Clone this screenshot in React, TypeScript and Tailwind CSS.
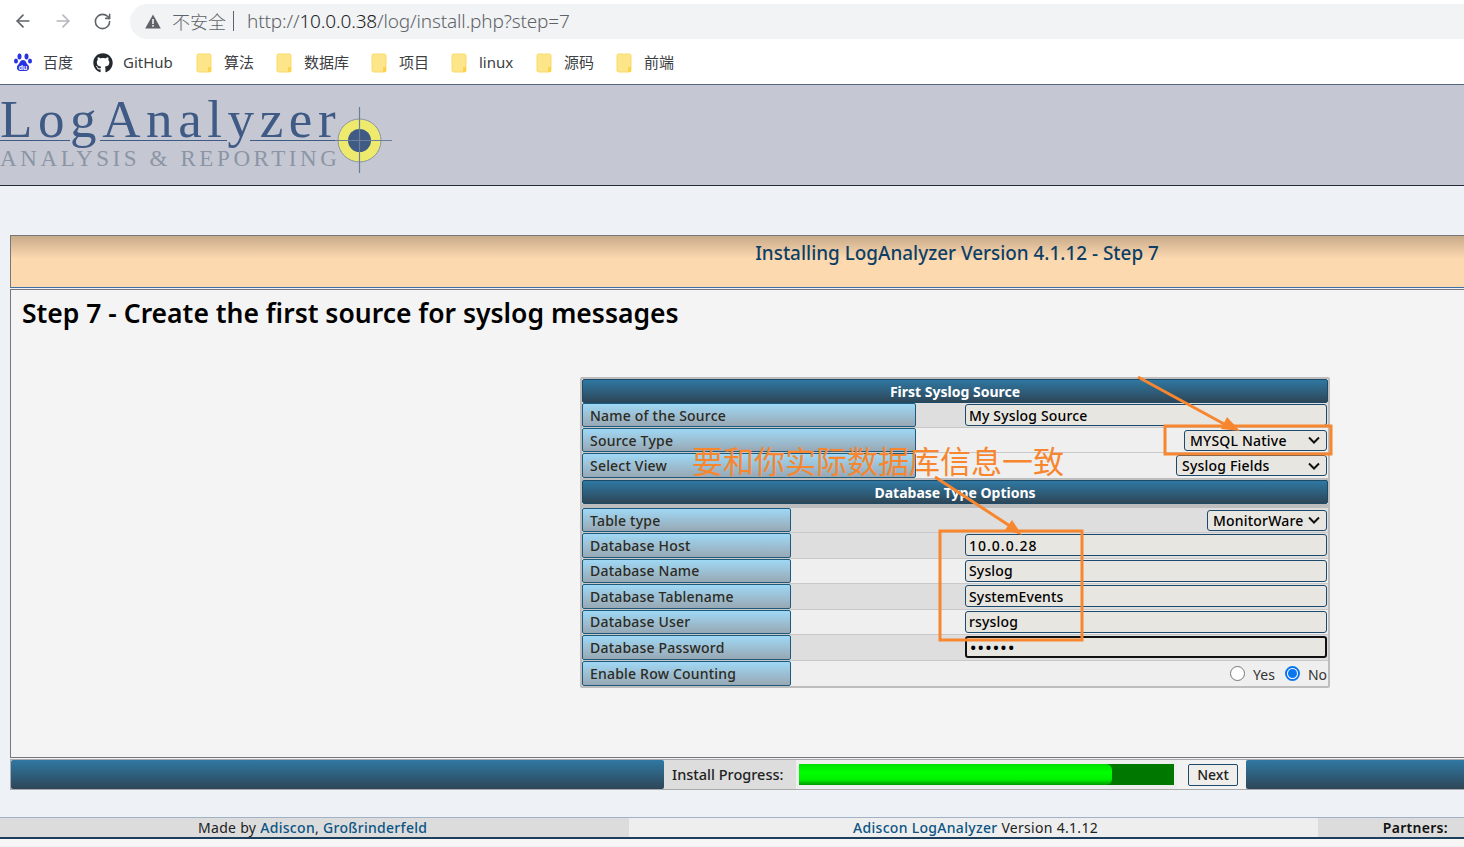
import { ArrowLeft, ArrowRight, RotateCw } from 'lucide-react';
import { FaGithub } from 'react-icons/fa';

const barBg = 'bg-[linear-gradient(#2f78a3,#2e4657)]';
const labelBg = 'bg-[linear-gradient(#9fd8f5,#98a8b4)]';

const bookmarks = [
  { name: '算法', w: 'w-[80px]' },
  { name: '数据库', w: 'w-[95px]' },
  { name: '项目', w: 'w-[80px]' },
  { name: 'linux', w: 'w-[85px]' },
  { name: '源码', w: 'w-[80px]' },
  { name: '前端', w: 'w-[80px]' },
];

function Folder() {
  return (
    <svg width="16" height="20" viewBox="0 0 16 20" className="shrink-0">
      <rect x="1" y="1" width="14" height="18" rx="1.5" fill="#fde68a" stroke="#fbd96b" />
      <path d="M12 19v-5h3v5z" fill="#fcd34d" />
    </svg>
  );
}

function BaiduPaw() {
  return (
    <svg width="18" height="20" viewBox="0 0 18 20" className="shrink-0">
      <ellipse cx="5.5" cy="3.5" rx="2" ry="3" fill="#2932e1" />
      <ellipse cx="12.5" cy="3.5" rx="2" ry="3" fill="#2932e1" />
      <ellipse cx="2" cy="8" rx="2" ry="2.6" fill="#2932e1" />
      <ellipse cx="16" cy="8" rx="2" ry="2.6" fill="#2932e1" />
      <path d="M9 7c-3 0-3 3-5 5-2 2-1 6 2 6h6c3 0 4-4 2-6-2-2-2-5-5-5z" fill="#2932e1" />
      <text x="9" y="16.5" textAnchor="middle" fontSize="7" fontWeight="700" fill="#fff" fontFamily="Liberation Sans, sans-serif">du</text>
    </svg>
  );
}

function Browser() {
  return (
    <div className="h-[85px] bg-white border-b border-[#52667f] font-['Noto_Sans','Noto_Sans_CJK_SC',sans-serif]">
      <div className="h-[42px] flex items-center">
        <div className="w-[130px] pl-[13px] flex items-center gap-[20px] text-[#5f6368]">
          <ArrowLeft size={20} strokeWidth={2} />
          <ArrowRight size={20} strokeWidth={2} className="text-[#b4b7bb]" />
          <RotateCw size={19} strokeWidth={2} />
        </div>
        <div className="flex-1 h-[35px] rounded-l-full bg-[#f1f3f4] flex items-center pl-[15px] text-[18px] text-[#5f6368]">
          <svg width="16" height="15" viewBox="0 0 16 15" className="shrink-0">
            <path d="M8 0.5 15.8 14.5H0.2z" fill="#5f6368" />
            <rect x="7.2" y="5" width="1.6" height="5" fill="#f1f3f4" />
            <rect x="7.2" y="11" width="1.6" height="1.7" fill="#f1f3f4" />
          </svg>
          <span className="ml-[11px] font-['Noto_Sans_CJK_SC',sans-serif] font-light">不安全</span>
          <span className="ml-[7px] w-px h-[20px] bg-[#5f6368]" />
          <span className="ml-[13px] text-[19px] tracking-[-0.15px] font-light">
            http://<span className="text-[#202124]">10.0.0.38</span>/log/install.php?step=7
          </span>
        </div>
      </div>
      <div className="h-[42px] flex items-center text-[15px] text-[#3c4043] pb-[1px]">
        <div className="w-[93px] pl-[14px] flex items-center gap-[11px]">
          <BaiduPaw />
          <span>百度</span>
        </div>
        <div className="w-[103px] flex items-center gap-[10px]">
          <FaGithub size={20} className="text-[#24292e]" />
          <span>GitHub</span>
        </div>
        {bookmarks.map((b) => (
          <div key={b.name} className={`${b.w} flex items-center gap-[12px]`}>
            <Folder />
            <span>{b.name}</span>
          </div>
        ))}
      </div>
    </div>
  );
}

function Logo() {
  return (
    <div className="h-[101px] bg-[#c5c8d2] border-b border-[#222b36] relative font-['Liberation_Serif',serif]">
      <div className="text-[53px] leading-[60px] tracking-[5.6px] text-[#3f5a85] pt-[4px] h-[64px] whitespace-nowrap">
        LogAnalyzer
      </div>
      <div className="text-[23px] leading-[26px] tracking-[3.6px] text-[#8b95a6] whitespace-nowrap mt-[-3px]">
        ANALYSIS &amp; REPORTING
      </div>
      <svg width="400" height="100" viewBox="0 0 400 100" className="absolute left-0 top-0">
        <path d="M0 55.5H70M100 55.5H227M250 55.5H338" stroke="#3f5a85" strokeWidth="1.2" />
        <circle cx="359.5" cy="55.5" r="21.5" fill="#edea6e" stroke="#8b95a6" />
        <circle cx="359.5" cy="55.5" r="11.5" fill="#3f5a85" />
        <path d="M359.5 22V88M335 55.5H392" stroke="#6d7f9b" strokeWidth="1.2" />
      </svg>
    </div>
  );
}

function SectionHead({ title, h }: { title: string; h: string }) {
  return (
    <div className={`${h} ${barBg} border border-[#1d4a66] rounded-[2px] flex items-center justify-center text-white font-bold text-[14px]`}>
      {title}
    </div>
  );
}

function Label({ w, text }: { w: string; text: string }) {
  return (
    <div className={`${w} h-full shrink-0 ${labelBg} border border-[#1d5a7c] rounded-[2px] pl-[7px] flex items-center text-[14px] tracking-[0.2px] font-medium text-[#2d2a22]`}>
      {text}
    </div>
  );
}

function Row({ w, label, alt, h, children }: { w: string; label: string; alt?: boolean; h: string; children: React.ReactNode }) {
  return (
    <div className={`${h} flex items-center ${alt ? 'bg-[#efefef]' : 'bg-[#dedede]'} border-b border-[#c8c8c8] last:border-b-0`}>
      <Label w={w} text={label} />
      {children}
    </div>
  );
}

function Input({ value, focus, wide }: { value: string; focus?: boolean; wide?: boolean }) {
  return (
    <div className={`ml-auto mr-[1px] w-[362px] h-[22px] bg-[#e8e6e1] rounded-[3px] flex items-center pl-[3px] font-medium text-black ${focus ? 'border-2 border-[#111] text-[17px] tracking-[1.2px]' : 'border border-[#1d4a6c] text-[14px]'} ${wide ? 'tracking-[1px]' : 'tracking-[0.15px]'}`}>
      {value}
    </div>
  );
}

function Select({ value, w }: { value: string; w: string }) {
  return (
    <div className={`ml-auto mr-[1px] ${w} h-[21px] bg-[#e8e6e1] border border-[#1d4a6c] rounded-[3px] flex items-center justify-between pl-[5px] pr-[5px] text-[14px] tracking-[0.2px] font-medium text-black`}>
      {value}
      <svg width="14" height="14" viewBox="0 0 14 14">
        <path d="M2 4.5 7 9.5 12 4.5" fill="none" stroke="#111" strokeWidth="2" />
      </svg>
    </div>
  );
}

function Radio({ on }: { on?: boolean }) {
  return on ? (
    <span className="w-[15px] h-[15px] rounded-full border-2 border-[#0a75f0] bg-white flex items-center justify-center">
      <span className="w-[9px] h-[9px] rounded-full bg-[#0a75f0]" />
    </span>
  ) : (
    <span className="w-[15px] h-[15px] rounded-full border border-[#767676] bg-white" />
  );
}

function SourceForm() {
  const w1 = 'w-[334px]';
  const w2 = 'w-[209px]';
  return (
    <div className="mx-auto w-[750px] mt-[45px] translate-x-[-2px]">
      <div className="border-2 border-[#bdbdbd] rounded-[2px] border-b-[3px]">
        <SectionHead title="First Syslog Source" h="h-[24px]" />
        <Row w={w1} label="Name of the Source" h="h-[25px]">
          <Input value="My Syslog Source" />
        </Row>
        <Row w={w1} label="Source Type" alt h="h-[25px]">
          <Select value="MYSQL Native" w="w-[143px]" />
        </Row>
        <Row w={w1} label="Select View" alt h="h-[25px]">
          <Select value="Syslog Fields" w="w-[151px]" />
        </Row>
      </div>
      <div className="border-2 border-[#bdbdbd] rounded-[2px] mt-[-3px]">
        <div className="border-b-[4px] border-[#bdbdbd]">
          <SectionHead title="Database Type Options" h="h-[24px]" />
        </div>
        <Row w={w2} label="Table type" h="h-[25px]">
          <Select value="MonitorWare" w="w-[120px]" />
        </Row>
        <Row w={w2} label="Database Host" h="h-[25.5px]">
          <Input value="10.0.0.28" wide />
        </Row>
        <Row w={w2} label="Database Name" alt h="h-[25.5px]">
          <Input value="Syslog" />
        </Row>
        <Row w={w2} label="Database Tablename" h="h-[25.5px]">
          <Input value="SystemEvents" />
        </Row>
        <Row w={w2} label="Database User" alt h="h-[25.5px]">
          <Input value="rsyslog" />
        </Row>
        <Row w={w2} label="Database Password" h="h-[25.5px]">
          <Input value="••••••" focus />
        </Row>
        <Row w={w2} label="Enable Row Counting" alt h="h-[25.5px]">
          <div className="ml-auto mr-[1px] flex items-center text-[14px] text-[#333]">
            <Radio />
            <span className="ml-[8px] mr-[10px] mt-[3px]">Yes</span>
            <Radio on />
            <span className="ml-[8px] mt-[3px]">No</span>
          </div>
        </Row>
      </div>
    </div>
  );
}

function Annotations() {
  return (
    <div className="absolute inset-0 pointer-events-none">
      <svg width="1464" height="847" viewBox="0 0 1464 847" className="absolute left-0 top-0">
        <path d="M1138 377 1226 425" stroke="#f7862f" strokeWidth="3" />
        <path d="M1240 431 1221 429 1227 417z" fill="#f7862f" />
        <path d="M935 477 1010 526" stroke="#f7862f" strokeWidth="3" />
        <path d="M1022 535 1005 530 1012 520z" fill="#f7862f" />
        <rect x="1165" y="426" width="166" height="28" fill="none" stroke="#f7862f" strokeWidth="3" />
        <rect x="940" y="531" width="142" height="109" fill="none" stroke="#f7862f" strokeWidth="3" />
      </svg>
      <div className="absolute left-[692px] top-[440px] text-[31px] leading-[40px] text-[#f7862f] font-['Noto_Sans_CJK_SC',sans-serif] font-normal whitespace-nowrap">
        要和你实际数据库信息一致
      </div>
    </div>
  );
}

export default function App() {
  return (
    <div className="relative w-[1464px] h-[847px] overflow-hidden bg-[#eef1f6] font-['Noto_Sans',sans-serif]">
      <Browser />
      <Logo />
      <div className="w-[1894px] ml-[10px] mt-[49px]">
        <div className="h-[53px] border border-[#777] bg-[linear-gradient(#c9ab8a,#fdd9b0_45%,#fdd9b0)] border-b-[#3a6fa8] text-center pt-[3px] text-[18.9px] font-medium text-[#0c3f66]">
          Installing LogAnalyzer Version 4.1.12 - Step 7
        </div>
        <div className="h-[469px] mt-px border border-[#777] bg-[#f4f4f4] overflow-hidden">
          <h1 className="pl-[11px] pt-[4px] text-[26.5px] leading-[38px] font-semibold text-black">
            Step 7 - Create the first source for syslog messages
          </h1>
          <SourceForm />
        </div>
        <div className="h-[31px] mt-px border border-[#aaa] bg-[#ddd] flex">
          <div className={`w-[653px] ${barBg} rounded-[2px]`} />
          <div className="w-[132px] pl-[8px] flex items-center text-[14.5px] font-medium text-[#222]">Install Progress:</div>
          <div className="w-[381px] bg-[#eee] flex items-center pl-[3px]">
            <div className="w-[375px] h-[21px] bg-[#007800] overflow-hidden">
              <div className="w-[313px] h-full rounded-r-[6px] bg-[linear-gradient(#00e000,#00ff00_40%,#00f000_75%,#009800)]" />
            </div>
          </div>
          <div className="w-[69px] bg-[#f2f2f2] flex items-center pl-[11px]">
            <div className="w-[50px] h-[22px] border border-[#1d4a6c] rounded-[2px] bg-[#f0eeea] flex items-center justify-center text-[14px] font-medium text-[#222]">
              Next
            </div>
          </div>
          <div className={`flex-1 ${barBg} rounded-[2px]`} />
        </div>
      </div>
      <div className="mt-[27px] h-[22px] border-t border-t-[#a0b3c6] border-b-2 border-b-[#1d3f5c] flex text-[14px] tracking-[0.3px] text-[#222]">
        <div className="w-[629px] bg-[#dcdcdc] pl-[198px] flex items-center">
          Made by&nbsp;<span className="text-[#0b5484] font-medium">Adiscon</span>,&nbsp;<span className="text-[#0b5484] font-medium">Großrinderfeld</span>
        </div>
        <div className="w-[689px] bg-[#eeeeee] flex items-center pl-[224px]">
          <span className="text-[#0b5484] font-medium">Adiscon LogAnalyzer</span>&nbsp;Version 4.1.12
        </div>
        <div className="flex-1 bg-[#dcdcdc] flex items-center justify-end pr-[16px] font-semibold text-[#111]">Partners:</div>
      </div>
      <div className="h-[7px] bg-[#f6f6f6]" />
      <Annotations />
    </div>
  );
}
